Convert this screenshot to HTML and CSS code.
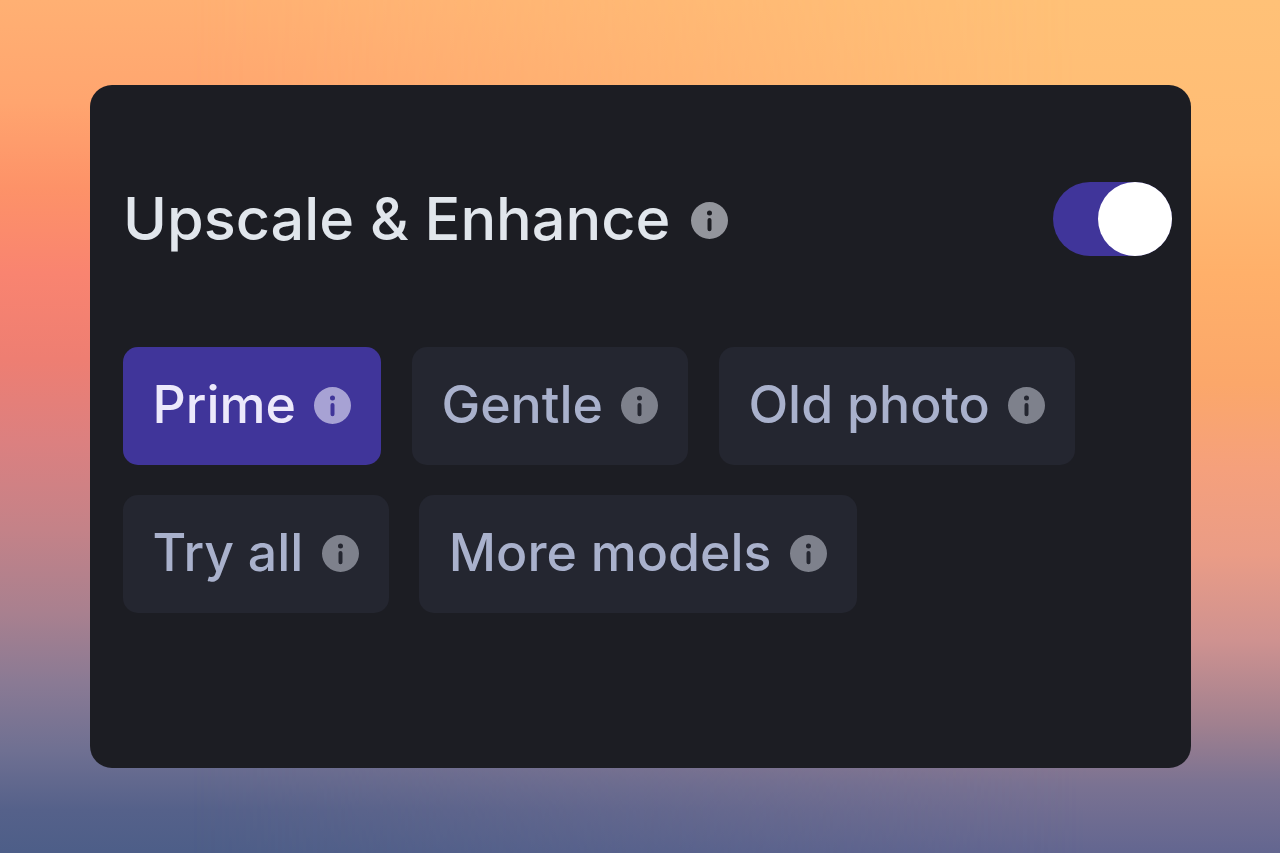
FILE: index.html
```html
<!DOCTYPE html>
<html lang="en">
<head>
<meta charset="utf-8">
<title>Upscale &amp; Enhance</title>
<link rel="stylesheet" href="styles.css">
</head>
<body>
<svg class="defs" width="0" height="0" aria-hidden="true">
  <symbol id="info" viewBox="0 0 37 37">
    <path fill-rule="evenodd" d="M18.5 0a18.5 18.5 0 1 0 0 37a18.5 18.5 0 1 0 0-37ZM18.5 8.6a2.5 2.5 0 1 1 0 5a2.5 2.5 0 1 1 0-5ZM18.5 16a2 2 0 0 1 2 2v9.2a2 2 0 0 1-4 0v-9.2a2 2 0 0 1 2-2Z"/>
  </symbol>
</svg>
<main class="card">
  <header class="head">
    <div class="title-wrap">
      <h1 class="title">Upscale &amp; Enhance</h1>
      <svg class="info info-title"><use href="#info"/></svg>
    </div>
    <div class="toggle"><span class="knob"></span></div>
  </header>
  <div class="chips">
    <button class="chip chip-active"><span class="chip-text">Prime</span><svg class="info"><use href="#info"/></svg></button>
    <button class="chip"><span class="chip-text">Gentle</span><svg class="info"><use href="#info"/></svg></button>
    <button class="chip"><span class="chip-text">Old photo</span><svg class="info"><use href="#info"/></svg></button>
    <button class="chip"><span class="chip-text">Try all</span><svg class="info"><use href="#info"/></svg></button>
    <button class="chip"><span class="chip-text">More models</span><svg class="info"><use href="#info"/></svg></button>
  </div>
</main>
</body>
</html>
```
FILE: styles.css
```css
* { box-sizing: border-box; }
html, body { height: 100%; }
body {
  margin: 0;
  height: 853px;
  overflow: hidden;
  padding: 85px 90px 85px 89.5px;
  font-family: Inter, "Liberation Sans", sans-serif;
  position: relative;
  background: linear-gradient(180deg, #ffb073 0%, #ffa56f 12%, #fd9268 22%, #f98470 32%, #ee7e72 42%, #db8080 52%, #c48288 62%, #a8808f 72%, #8a7a94 80%, #6f7092 88%, #55618a 95%, #4d5e88 100%);
}
body::before {
  content: "";
  position: absolute;
  inset: 0;
  background: linear-gradient(180deg, #ffc177 0%, #ffbc75 18%, #ffb06a 32%, #fba76a 45%, #f5a07c 55%, #ea9c86 65%, #cf9290 75%, #a0808f 85%, #7a7292 92%, #636690 100%);
  -webkit-mask-image: linear-gradient(90deg, transparent 0%, transparent 15%, #000 85%);
  mask-image: linear-gradient(90deg, transparent 0%, transparent 15%, #000 85%);
}
.defs { position: absolute; }
.card {
  position: relative;
  height: 683px;
  width: 1101px;
  background: #1c1d23;
  border-radius: 22px;
  padding: 96px 19px 0 33.5px;
}
.head {
  display: flex;
  align-items: center;
  justify-content: space-between;
  height: 76px;
}
.title-wrap { display: flex; align-items: center; gap: 21px; }
.title {
  margin: 0 0 3px;
  font-size: 59.4px;
  font-weight: 450;
  line-height: 74px;
  color: #e1e6ec;
}
.info { width: 37px; height: 37px; flex: none; fill: #7e818c; margin-left: 18.5px; }
.info-title { margin-left: 0; margin-top: 3px; fill: #93959c; }
.toggle {
  width: 119px;
  height: 74px;
  border-radius: 37px;
  background: #40359a;
  display: flex;
  justify-content: flex-end;
}
.knob { width: 74px; height: 74px; border-radius: 50%; background: #fff; }
.chips {
  display: flex;
  flex-wrap: wrap;
  gap: 30px 30.5px;
  margin-top: 90px;
  max-width: 1000px;
}
.chip {
  display: flex;
  align-items: center;
  height: 118px;
  padding: 0 30px 0 29.5px;
  border: 0;
  border-radius: 15px;
  background: #242630;
  color: #a9b1cc;
  font: 450 51.8px Inter, "Liberation Sans", sans-serif;
}
.chip-text { margin-top: -4px; }
.chip .info { margin-top: -2px; }
.chip-active { background: #40359a; color: #ece9fb; }
.chip-active .info { fill: #a7a2d4; }
```
